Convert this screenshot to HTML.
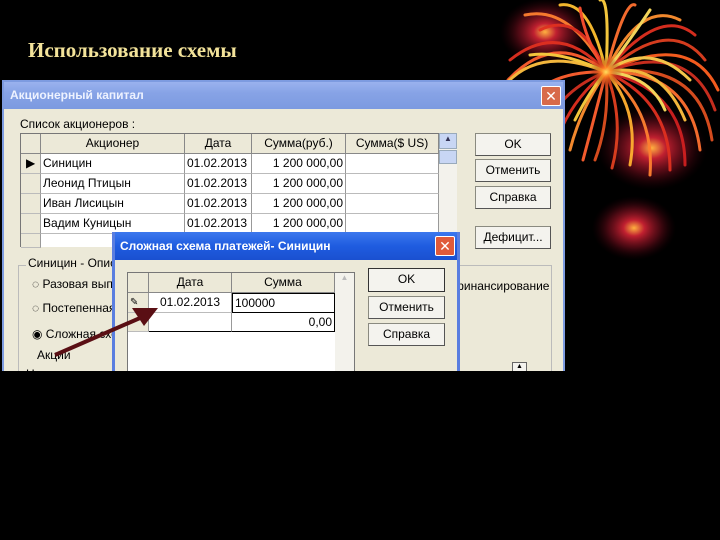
<!DOCTYPE html>
<html><head><meta charset="utf-8"><style>
*{margin:0;padding:0;box-sizing:border-box}
body{width:720px;height:540px;background:#000;position:relative;overflow:hidden;font-family:"Liberation Sans","DejaVu Sans",sans-serif;font-size:12px;color:#000}
.a{position:absolute}
.h{font-family:"Liberation Serif",serif;font-weight:bold;font-size:21px;color:#f3e39a;left:28px;top:38px}
.win{background:#ece9d8}
.tb{background:linear-gradient(#9ab2ee,#87a3e6 40%,#7c9ae0);color:#eef2ff;font-weight:bold;font-size:12px}
.x{background:#d86a4a;border:1px solid #fff;color:#fff;font-weight:bold;text-align:center;border-radius:2px}
.btn{background:#f4f3ee;border:1px solid #8a8a80;border-right-color:#555;border-bottom-color:#555;text-align:center;line-height:20px}
.grid{background:#fff;border:1px solid #777}
.c{position:absolute;border-right:1px solid #999;border-bottom:1px solid #bbb;padding:0 2px;line-height:19px;white-space:nowrap;overflow:hidden}
.hd{background:#ece9d8;text-align:center;border-right:1px solid #888;border-bottom:1px solid #888}
.ind{background:#ece9d8}
.r{text-align:right}
</style></head><body>
<svg class="a" style="left:0;top:0" width="720" height="540">
<defs>
<radialGradient id="g1"><stop offset="0" stop-color="#ffb040"/><stop offset=".25" stop-color="#c02030"/><stop offset=".6" stop-color="#801020" stop-opacity=".6"/><stop offset="1" stop-color="#300008" stop-opacity="0"/></radialGradient>
<radialGradient id="g2"><stop offset="0" stop-color="#ffe060"/><stop offset=".3" stop-color="#ff8020" stop-opacity=".8"/><stop offset="1" stop-color="#500" stop-opacity="0"/></radialGradient>
</defs>
<ellipse cx="545" cy="32" rx="45" ry="34" fill="url(#g1)"/>
<ellipse cx="652" cy="148" rx="55" ry="42" fill="url(#g1)"/>
<ellipse cx="634" cy="228" rx="42" ry="32" fill="url(#g1)"/>
<g fill="none" stroke-width="3" stroke-linecap="round" opacity=".95">
<path d="M606,72 Q560,20 510,60" stroke="#e03020"/>
<path d="M606,72 Q555,30 508,80" stroke="#ff6030"/>
<path d="M606,72 Q570,5 525,15" stroke="#ff8030"/>
<path d="M606,72 Q580,10 540,30" stroke="#e03020"/>
<path d="M606,72 Q590,0 560,5" stroke="#ffc030"/>
<path d="M606,72 Q610,-5 600,0" stroke="#ffd040"/>
<path d="M606,72 Q625,0 635,5" stroke="#ff7030"/>
<path d="M606,72 Q640,0 680,20" stroke="#ff9030"/>
<path d="M606,72 Q660,5 695,35" stroke="#e03020"/>
<path d="M606,72 Q670,15 705,60" stroke="#e04020"/>
<path d="M606,72 Q690,30 718,90" stroke="#ff6020"/>
<path d="M606,72 Q690,40 715,110" stroke="#d03020"/>
<path d="M606,72 Q700,60 712,140" stroke="#e05020"/>
<path d="M606,72 Q690,70 700,150" stroke="#ff7030"/>
<path d="M606,72 Q685,90 685,165" stroke="#d02020"/>
<path d="M606,72 Q670,100 670,170" stroke="#e03020"/>
<path d="M606,72 Q655,110 650,175" stroke="#ff8030"/>
<path d="M606,72 Q640,110 630,165" stroke="#ffb030"/>
<path d="M606,72 Q625,120 612,168" stroke="#e04020"/>
<path d="M606,72 Q610,120 595,160" stroke="#e05020"/>
<path d="M606,72 Q595,115 583,160" stroke="#ff6030"/>
<path d="M606,72 Q580,110 570,150" stroke="#ff9030"/>
<path d="M606,72 Q570,100 555,145" stroke="#e03020"/>
<path d="M606,72 Q560,90 545,130" stroke="#d03020"/>
<path d="M606,72 Q545,70 520,110" stroke="#ff6030"/>
<path d="M606,72 Q540,45 505,85" stroke="#ffc040"/>
<path d="M606,72 Q650,40 690,80" stroke="#ffd050"/>
<path d="M606,72 Q660,60 685,120" stroke="#ffc040"/>
<path d="M606,72 Q630,40 650,10" stroke="#ffe060"/>
<path d="M606,72 Q585,40 580,8" stroke="#ff5030"/>
<path d="M606,72 Q560,50 530,55" stroke="#ffd040"/>
<path d="M606,72 Q650,75 665,110" stroke="#ffe060"/>
<path d="M606,72 Q590,90 575,120" stroke="#ffd040"/>
</g>
<circle cx="606" cy="72" r="16" fill="url(#g2)"/>
</svg>
<div class="a h">Использование схемы</div>

<div class="a win" style="left:2px;top:80px;width:563px;height:291px;border:2px solid #7d9be0;border-bottom:none;overflow:hidden">
<div class="a tb" style="left:0;top:0;width:559px;height:27px;line-height:27px;padding-left:6px">Акционерный капитал</div>
<div class="a x" style="left:537px;top:4px;width:20px;height:20px;line-height:18px;font-size:14px">✕</div>
<div class="a" style="left:16px;top:35px">Список акционеров :</div>
<div class="a grid" style="left:16px;top:51px;width:419px;height:114px;border-bottom:none">
 <div class="c hd" style="left:0;top:0;width:20px;height:20px"></div>
 <div class="c hd" style="left:20px;top:0;width:144px;height:20px">Акционер</div>
 <div class="c hd" style="left:164px;top:0;width:67px;height:20px">Дата</div>
 <div class="c hd" style="left:231px;top:0;width:94px;height:20px">Сумма(руб.)</div>
 <div class="c hd" style="left:325px;top:0;width:93px;height:20px">Сумма($ US)</div>
 <div class="c ind" style="left:0;top:20px;width:20px;height:20px;padding:0 5px">▶</div>
 <div class="c" style="left:20px;top:20px;width:144px;height:20px">Синицин</div>
 <div class="c" style="left:164px;top:20px;width:67px;height:20px">01.02.2013</div>
 <div class="c r" style="left:231px;top:20px;width:94px;height:20px">1 200 000,00</div>
 <div class="c" style="left:325px;top:20px;width:93px;height:20px"></div>
 <div class="c ind" style="left:0;top:40px;width:20px;height:20px"></div>
 <div class="c" style="left:20px;top:40px;width:144px;height:20px">Леонид Птицын</div>
 <div class="c" style="left:164px;top:40px;width:67px;height:20px">01.02.2013</div>
 <div class="c r" style="left:231px;top:40px;width:94px;height:20px">1 200 000,00</div>
 <div class="c" style="left:325px;top:40px;width:93px;height:20px"></div>
 <div class="c ind" style="left:0;top:60px;width:20px;height:20px"></div>
 <div class="c" style="left:20px;top:60px;width:144px;height:20px">Иван Лисицын</div>
 <div class="c" style="left:164px;top:60px;width:67px;height:20px">01.02.2013</div>
 <div class="c r" style="left:231px;top:60px;width:94px;height:20px">1 200 000,00</div>
 <div class="c" style="left:325px;top:60px;width:93px;height:20px"></div>
 <div class="c ind" style="left:0;top:80px;width:20px;height:20px"></div>
 <div class="c" style="left:20px;top:80px;width:144px;height:20px">Вадим Куницын</div>
 <div class="c" style="left:164px;top:80px;width:67px;height:20px">01.02.2013</div>
 <div class="c r" style="left:231px;top:80px;width:94px;height:20px">1 200 000,00</div>
 <div class="c" style="left:325px;top:80px;width:93px;height:20px"></div>
 <div class="c ind" style="left:0;top:100px;width:20px;height:14px"></div>
</div>
<div class="a" style="left:435px;top:51px;width:18px;height:114px;background:#f3f2ec">
 <div style="height:16px;background:#c8d6f4;border:1px solid #9ab;text-align:center;font-size:8px;color:#335">▲</div>
 <div style="height:14px;margin-top:1px;background:#c8d6f4;border:1px solid #9ab"></div>
</div>
<div class="a btn" style="left:471px;top:51px;width:76px;height:23px">OK</div>
<div class="a btn" style="left:471px;top:77px;width:76px;height:23px">Отменить</div>
<div class="a btn" style="left:471px;top:104px;width:76px;height:23px">Справка</div>
<div class="a btn" style="left:471px;top:144px;width:76px;height:23px">Дефицит...</div>
<div class="a" style="left:14px;top:183px;width:534px;height:140px;border:1px solid #bbb"></div>
<div class="a" style="left:22px;top:174px;background:#ece9d8;padding:0 2px">Синицин - Описание</div>
<div class="a" style="left:28px;top:195px">◌ Разовая выплата</div>
<div class="a" style="left:28px;top:219px">◌ Постепенная</div>
<div class="a" style="left:28px;top:245px">◉ Сложная схема</div>
<div class="a" style="left:30px;top:266px;background:#ece9d8;padding:0 3px">Акции</div>
<div class="a" style="left:450px;top:197px">финансирование</div>
<div class="a" style="left:22px;top:285px">Номинальная стоимость</div>
<div class="a" style="left:508px;top:280px;width:15px;height:12px;border:1px solid #666;background:#f4f3ee;font-size:7px;text-align:center">▲</div>
</div>

<div class="a win" style="left:112px;top:232px;width:348px;height:139px;border:3px solid #5a7ee0;border-bottom:none;border-top:none;overflow:hidden">
<div class="a" style="left:0;top:0;width:342px;height:28px;line-height:28px;padding-left:5px;background:linear-gradient(#3c78ee,#1f5ce0 50%,#1a50d0);color:#fff;font-weight:bold;font-size:12px">Сложная схема платежей- Синицин</div>
<div class="a x" style="left:320px;top:4px;width:20px;height:20px;line-height:18px;font-size:14px;background:#e05a3a">✕</div>
<div class="a" style="left:12px;top:40px;width:228px;height:99px;background:#fff;border:1px solid #777;border-bottom:none">
 <div class="c hd" style="left:0;top:0;width:21px;height:20px"></div>
 <div class="c hd" style="left:21px;top:0;width:83px;height:20px">Дата</div>
 <div class="c hd" style="left:104px;top:0;width:103px;height:20px">Сумма</div>
 <div class="c ind" style="left:0;top:20px;width:21px;height:20px;font-size:10px">✎</div>
 <div class="c" style="left:21px;top:20px;width:83px;height:20px;text-align:center">01.02.2013</div>
 <div class="c" style="left:104px;top:20px;width:103px;height:20px;border:1px solid #000">100000</div>
 <div class="c ind" style="left:0;top:40px;width:21px;height:19px"></div>
 <div class="c" style="left:21px;top:40px;width:83px;height:19px;border-bottom:1px solid #000"></div>
 <div class="c r" style="left:104px;top:40px;width:103px;height:19px;border-bottom:1px solid #000;border-right:1px solid #000">0,00</div>
 <div class="a" style="left:207px;top:0;width:19px;height:99px;background:#f3f2ec;color:#bbb;text-align:center;font-size:8px">▲</div>
</div>
<div class="a btn" style="left:253px;top:36px;width:77px;height:24px;border:1px solid #333">OK</div>
<div class="a btn" style="left:253px;top:64px;width:77px;height:23px">Отменить</div>
<div class="a btn" style="left:253px;top:91px;width:77px;height:23px">Справка</div>
</div>

<svg class="a" style="left:0;top:0" width="720" height="540">
<path d="M55,355 L140,318" stroke="#5a0f14" stroke-width="4" fill="none"/>
<polygon points="158,308 132,308 144,326" fill="#5a0f14"/>
</svg>
</body></html>
